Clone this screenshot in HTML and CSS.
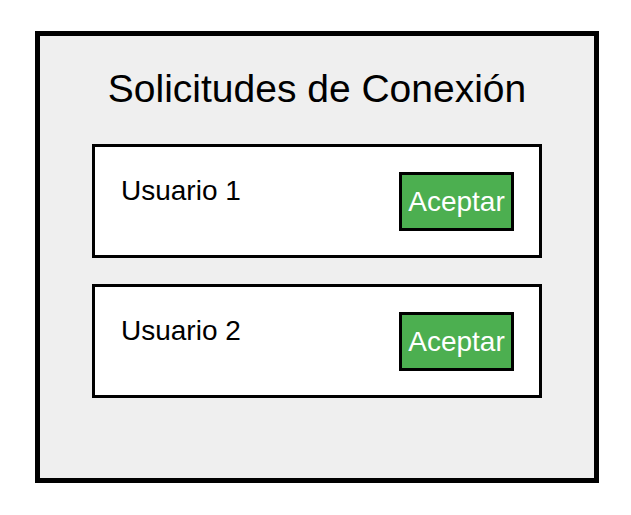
FILE: index.html
```html
<!DOCTYPE html>
<html lang="es">
<head>
<meta charset="utf-8">
<title>Solicitudes de Conexión</title>
<link rel="stylesheet" href="styles.css">
</head>
<body>
<div class="panel">
  <h1 class="title">Solicitudes de Conexión</h1>
  <div class="list">
    <div class="card">
      <span class="name">Usuario 1</span>
      <button class="accept">Aceptar</button>
    </div>
    <div class="card">
      <span class="name">Usuario 2</span>
      <button class="accept">Aceptar</button>
    </div>
  </div>
</div>
</body>
</html>
```

FILE: styles.css
```css
html, body {
  margin: 0;
  padding: 0;
  background: #ffffff;
}

body {
  font-family: "Liberation Sans", Arial, sans-serif;
  color: #000;
  padding: 31px 0 0 35px;
}

.panel {
  box-sizing: border-box;
  width: 564px;
  height: 452px;
  border: 5px solid #000;
  background: #efefef;
  padding: 31px 52px 0;
}

.title {
  margin: 0;
  font-size: 39px;
  font-weight: normal;
  line-height: 44px;
  text-align: center;
}

.list {
  margin-top: 33px;
  display: flex;
  flex-direction: column;
  gap: 26px;
}

.card {
  box-sizing: border-box;
  height: 114px;
  border: 3px solid #000;
  background: #fff;
  padding: 25px 25px 0 25px;
  display: flex;
  justify-content: space-between;
  align-items: flex-start;
}

.name {
  font-size: 28px;
  line-height: 32px;
  padding-top: 3px;
  padding-left: 1px;
}

.accept {
  box-sizing: border-box;
  width: 115px;
  height: 59px;
  border: 3px solid #000;
  background: #4caf50;
  color: #fff;
  font-family: "Liberation Sans", Arial, sans-serif;
  font-size: 28px;
  line-height: 32px;
  padding: 0;
  display: flex;
  align-items: center;
  justify-content: center;
}
```
